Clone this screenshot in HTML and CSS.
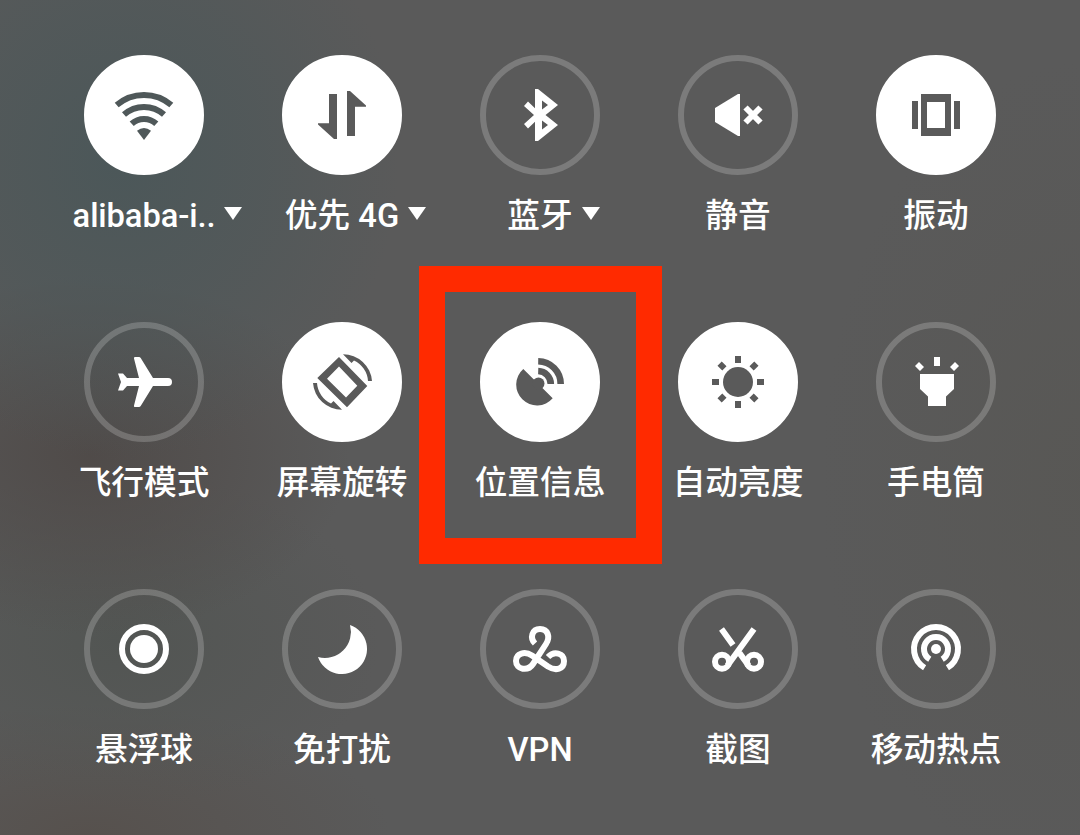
FILE: index.html
```html
<!DOCTYPE html>
<html lang="zh-CN">
<head>
  <meta charset="UTF-8" />
  <meta name="viewport" content="width=device-width, initial-scale=1.0" />
  <title>快捷设置</title>
  <link rel="stylesheet" href="styles.css">
</head>
<body>
  <div class="panel">
    <!-- row 1 -->
    <div class="tile on wifi">
      <button class="circle" aria-label="WLAN">
        <svg viewBox="-30 -30 60 60">
          <g class="line">
            <path d="M-27.3 -10A42 42 0 0 1 27.3 -10" />
            <path d="M-20 -.4A30 30 0 0 1 20 -.4" />
            <path d="M-12.3 8.8A18 18 0 0 1 12.3 8.8" />
          </g>
          <path d="M-7 15.8Q0 10.2 7 15.8L0 25Z" />
        </svg>
      </button>
      <div class="label more">alibaba-i..</div>
    </div>
    <div class="tile on">
      <button class="circle" aria-label="优先 4G">
        <svg viewBox="-30 -30 60 60">
          <path d="M-13 -21H-5V24H-8L-24 9.5V8.3H-13Z" />
          <path d="M13 21H5V-24H8L24 -9.5V-8.3H13Z" />
        </svg>
      </button>
      <div class="label more">优先 4G</div>
    </div>
    <div class="tile">
      <button class="circle" aria-label="蓝牙">
        <svg viewBox="-30 -30 60 60">
          <path fill-rule="evenodd" d="M-5 -26H-2L18 -10L5.5 0L18 10L-2 26H-5V6.8L-12 13.5L-16 9L-6 0L-16 -9L-12 -13.5L-5 -6.8ZM2 -14.5V-5.5L8 -10ZM2 14.5V5.5L8 10Z" />
        </svg>
      </button>
      <div class="label more">蓝牙</div>
    </div>
    <div class="tile">
      <button class="circle" aria-label="静音">
        <svg viewBox="-30 -30 60 60">
          <path d="M-23 -7L0 -21H2V21H0L-23 7Z" />
          <path class="line" d="M7.5 -7.5L22.5 7.5M22.5 -7.5L7.5 7.5" />
        </svg>
      </button>
      <div class="label">静音</div>
    </div>
    <div class="tile on">
      <button class="circle" aria-label="振动">
        <svg viewBox="-30 -30 60 60">
          <path fill-rule="evenodd" d="M-15 -21H15V21H-15ZM-9 -13V13H9V-13Z" />
          <path d="M-24 -14H-18V14H-24ZM18 -14H24V14H18Z" />
        </svg>
      </button>
      <div class="label">振动</div>
    </div>

    <!-- row 2 -->
    <div class="tile">
      <button class="circle" aria-label="飞行模式">
        <svg viewBox="-30 -30 60 60">
          <path d="M-10 -23.5Q-10.5 -25 -9 -25H-5Q-4 -25 -3.3 -24L9 -4H24Q28 -4 28 0Q28 4 24 4H9L-3.3 24Q-4 25 -5 25H-9Q-10.5 25 -10 23.5L-5 4H-17L-21 8.5H-26L-23 0L-26 -8.5H-21L-17 -4H-5Z" />
        </svg>
      </button>
      <div class="label">飞行模式</div>
    </div>
    <div class="tile on">
      <button class="circle" aria-label="屏幕旋转">
        <svg viewBox="-30 -30 60 60">
          <path fill-rule="evenodd" d="M-3 -25L25.3 4L5 25.3L-24.7 -4ZM-3 -15.5L-15 -3.2L4 15.5L15.3 3.7Z" />
          <path d="M1 -27.8A29 29 0 0 1 30 -1H26A24.5 24.5 0 0 0 12 -21.5L9.5 -19Z" />
          <path d="M0 27.8A29 29 0 0 1 -29 1H-25A24.5 24.5 0 0 0 -11 21.5L-8.5 19Z" />
        </svg>
      </button>
      <div class="label">屏幕旋转</div>
    </div>
    <div class="tile on marked">
      <button class="circle" aria-label="位置信息">
        <svg viewBox="-30 -30 60 60">
          <path d="M-16.7 -13A20.8 20.8 0 1 0 12.7 16.3Z" />
          <circle cx="-1.5" cy="1.5" r="6" />
          <path class="line dish" d="M-1.8 -11A13 13 0 0 1 10.8 2M-1.8 -20.8A22.8 22.8 0 0 1 20.7 2" />
        </svg>
      </button>
      <div class="label">位置信息</div>
    </div>
    <div class="tile on">
      <button class="circle" aria-label="自动亮度">
        <svg viewBox="-30 -30 60 60">
          <circle r="15" />
          <path class="line" d="M0 -26V-19M0 19V26M-26 0H-19M19 0H26M-18.4 -18.4L-13.6 -13.6M13.6 13.6L18.4 18.4M-18.4 18.4L-13.6 13.6M13.6 -13.6L18.4 -18.4" />
        </svg>
      </button>
      <div class="label">自动亮度</div>
    </div>
    <div class="tile">
      <button class="circle" aria-label="手电筒">
        <svg viewBox="-30 -30 60 60">
          <path d="M-16 -8H18V7L10 14.5V24H-8V14.5L-16 7Z" />
          <path d="M-2 -25H4V-16H-2Z" />
          <path d="M-17 -20L-12 -15L-16 -11L-21 -16ZM19 -20L14 -15L18 -11L23 -16Z" />
        </svg>
      </button>
      <div class="label">手电筒</div>
    </div>

    <!-- row 3 -->
    <div class="tile">
      <button class="circle" aria-label="悬浮球">
        <svg viewBox="-30 -30 60 60">
          <circle r="14" />
          <circle class="line" r="22" />
        </svg>
      </button>
      <div class="label">悬浮球</div>
    </div>
    <div class="tile">
      <button class="circle" aria-label="免打扰">
        <svg viewBox="-30 -30 60 60">
          <path d="M8 -24A25.2 25.2 0 1 1 -24 8A26 26 0 0 0 8 -24Z" />
        </svg>
      </button>
      <div class="label">免打扰</div>
    </div>
    <div class="tile">
      <button class="circle" aria-label="VPN">
        <svg viewBox="-30 -30 60 60">
          <path class="line" d="M-5 -5.5C-10.5 -11 -8 -20 0 -20C8 -20 10.5 -12 6 -5L-7 15C-12 22.5 -24 21 -24 12C-24 4 -15 2 -8 6.5L8 17.5C16 22.5 24 20 24 12C24 4 14 1.5 8 8" />
        </svg>
      </button>
      <div class="label">VPN</div>
    </div>
    <div class="tile">
      <button class="circle" aria-label="截图">
        <svg viewBox="-30 -30 60 60">
          <g class="line">
            <circle cx="-16" cy="12.7" r="7" />
            <circle cx="16" cy="12.7" r="7" />
            <path d="M16 -20L-10.5 16.5M-16.5 -20L-5 -4M1.5 4L10.5 16.5" />
          </g>
        </svg>
      </button>
      <div class="label">截图</div>
    </div>
    <div class="tile">
      <button class="circle" aria-label="移动热点">
        <svg viewBox="-30 -30 60 60">
          <circle r="5" />
          <path class="line" d="M-11.4 18.8A22 22 0 1 1 11.4 18.8M-6.2 10.3A12 12 0 1 1 6.2 10.3" />
        </svg>
      </button>
      <div class="label">移动热点</div>
    </div>
  </div>
</body>
</html>
```

FILE: styles.css
```css
* {
  box-sizing: border-box;
}
body {
  margin: 0;
  height: 835px;
  overflow: hidden;
  color: #fff;
  font-family: Roboto, "Noto Sans CJK SC", sans-serif;
  background:
    radial-gradient(ellipse 280px 300px at 120px 160px, rgba(74, 87, 89, 0.9), rgba(74, 87, 89, 0.5) 50%, rgba(74, 87, 89, 0) 100%),
    radial-gradient(ellipse 260px 180px at 90px 455px, rgba(79, 74, 72, 0.95), rgba(79, 74, 72, 0.5) 50%, rgba(79, 74, 72, 0) 100%),
    radial-gradient(ellipse 260px 170px at 120px 640px, rgba(80, 84, 81, 0.8), rgba(80, 84, 81, 0) 100%),
    radial-gradient(ellipse 300px 130px at 90px 835px, rgba(86, 80, 76, 0.9), rgba(86, 80, 76, 0) 100%),
    radial-gradient(ellipse 260px 420px at 1080px 480px, rgba(88, 87, 84, 0.8), rgba(88, 87, 84, 0) 100%),
    #5a5a5a;
}
.panel {
  display: grid;
  grid-template-columns: repeat(5, 198px);
  grid-auto-rows: 267px;
  justify-content: center;
  padding-top: 55px;
}
.tile {
  position: relative;
  display: flex;
  flex-direction: column;
  align-items: center;
}
.circle {
  display: flex;
  align-items: center;
  justify-content: center;
  width: 120px;
  height: 120px;
  padding: 0;
  border: 6px solid rgba(255, 255, 255, 0.2);
  border-radius: 50%;
  background: none;
  color: #fff;
}
.on .circle {
  border-color: #fff;
  background: #fff;
  color: #5a5a5a;
}
.wifi .circle {
  color: #4f5859;
}
.circle svg {
  width: 60px;
  height: 60px;
  fill: currentColor;
  overflow: visible;
}
.circle .line {
  fill: none;
  stroke: currentColor;
  stroke-width: 6;
}
.circle .dish {
  stroke-width: 6.6;
}
.label {
  position: relative;
  margin-top: 17px;
  font-size: 32.7px;
  font-weight: 500;
  line-height: 49px;
  white-space: nowrap;
}
.wifi .label {
  letter-spacing: -0.1px;
}
/* dropdown arrow */
.more::after {
  content: "";
  position: absolute;
  left: 100%;
  top: 15px;
  margin-left: 9px;
  border: 9px solid transparent;
  border-top: 13px solid #fff;
  border-bottom: 0;
}
/* red highlight box */
.marked::before {
  content: "";
  position: absolute;
  box-sizing: border-box;
  top: -56.5px;
  left: -22.5px;
  width: 243px;
  height: 298px;
  border: 26.5px solid #ff2a00;
}
```
